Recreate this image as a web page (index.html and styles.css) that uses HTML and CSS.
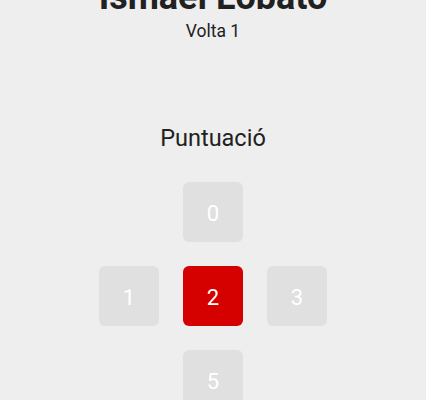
FILE: index.html
```html
<!DOCTYPE html>
<html lang="ca">
  <head>
    <meta charset="utf-8" />
    <meta name="viewport" content="width=device-width, initial-scale=1" />
    <title>Puntuació | Volta 1</title>
    <link rel="stylesheet" href="styles.css">
  </head>
  <body>
    <div class="screen">
        <!-- player header, scrolled partly out of view -->
        <div class="player">
            <h1 class="player-name">Ismael Lobato</h1>
            <p class="round">Volta 1</p>
        </div>

        <h2 class="score-title">Puntuació</h2>

        <!-- score picker: 3x3 grid, only the cross cells are used -->
        <div class="score-grid">
            <button class="score-btn pos-top">0</button>
            <button class="score-btn pos-left">1</button>
            <button class="score-btn selected pos-mid">2</button>
            <button class="score-btn pos-right">3</button>
            <button class="score-btn pos-bottom">5</button>
        </div>
    </div>
  </body>
</html>
```

FILE: styles.css
```css
body {
    margin: 0;
    background-color: #eeeeee;
    font-family: Roboto, "Noto Sans", sans-serif;
    color: #212121;
}

.screen {
    display: flex;
    flex-direction: column;
    align-items: center;
    /* header is scrolled up a bit, so the name gets cut off */
    margin-top: -23px;
}

.player {
    text-align: center;
}

.player-name {
    margin: 0;
    font-size: 36px;
    font-weight: 700;
    line-height: 40px;
}

.round {
    margin: 3px 0 0 0;
    font-size: 17.5px;
    line-height: 22px;
}

.score-title {
    margin: 81px 0 0 0;
    font-size: 23.5px;
    font-weight: 400;
    line-height: 30px;
}

.score-grid {
    display: grid;
    grid-template-columns: repeat(3, 60px);
    grid-template-rows: repeat(3, 60px);
    gap: 24px;
    margin-top: 29px;
}

.score-btn {
    border: none;
    border-radius: 6px;
    background-color: #e0e0e0;
    color: #ffffff;
    font-family: Roboto, "Noto Sans", sans-serif;
    font-size: 22px;
    padding: 2px 0 0 0;
    cursor: pointer;
}

.score-btn.selected {
    background-color: #d50000;
}

.pos-top { grid-column: 2; grid-row: 1; }
.pos-left { grid-column: 1; grid-row: 2; }
.pos-mid { grid-column: 2; grid-row: 2; }
.pos-right { grid-column: 3; grid-row: 2; }
.pos-bottom { grid-column: 2; grid-row: 3; }
```
